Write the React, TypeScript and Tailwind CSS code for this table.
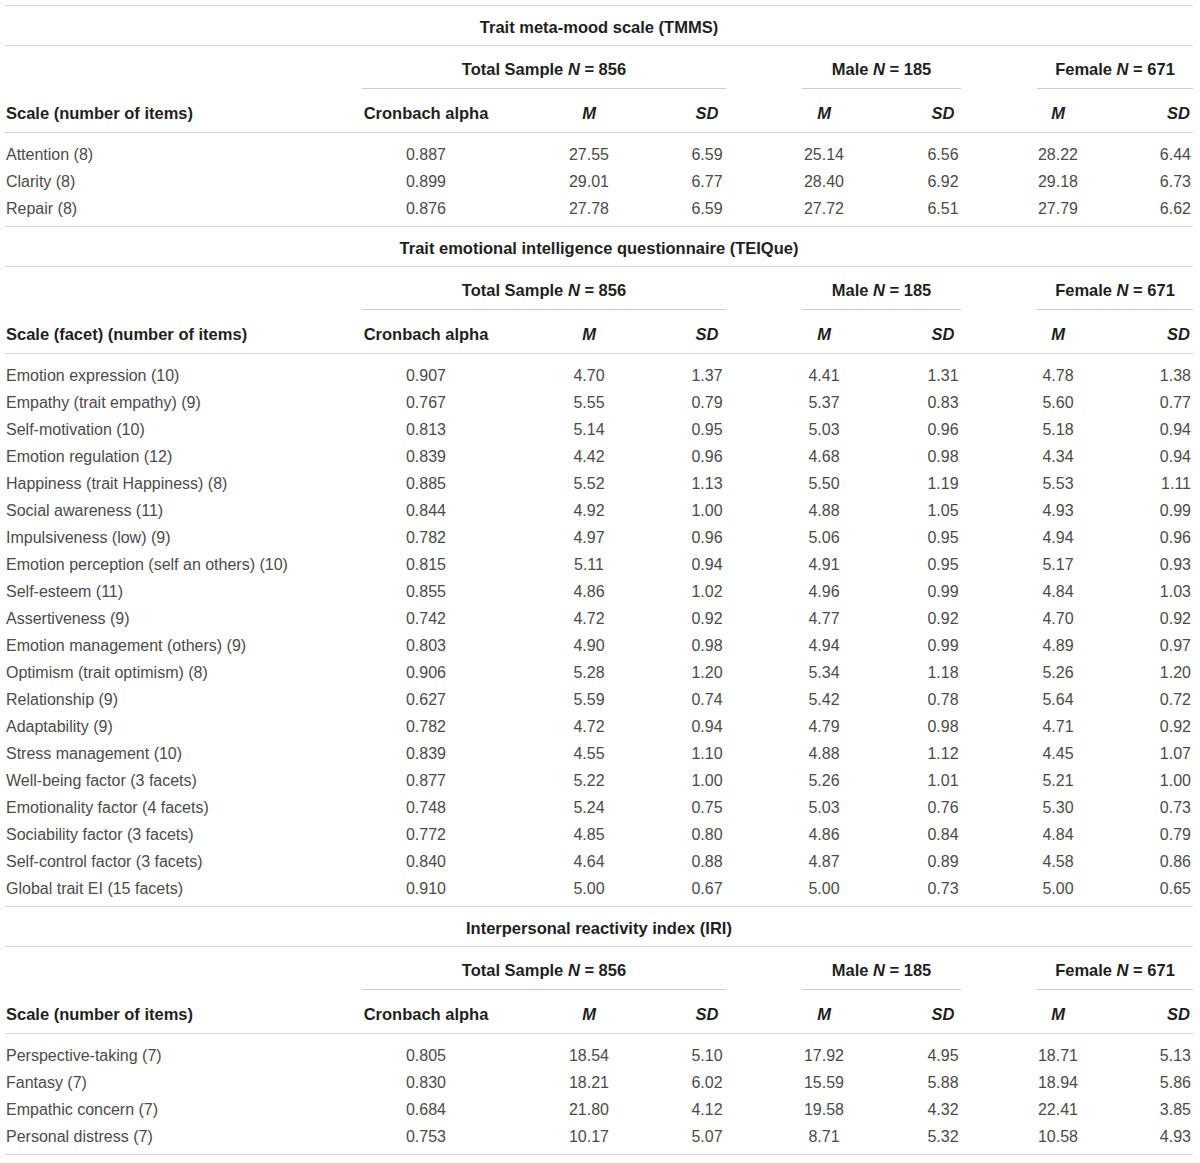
import { FC } from "react";

type Row = [string, string, string, string, string, string, string, string];

const tmms: Row[] = [
  ["Attention (8)", "0.887", "27.55", "6.59", "25.14", "6.56", "28.22", "6.44"],
  ["Clarity (8)", "0.899", "29.01", "6.77", "28.40", "6.92", "29.18", "6.73"],
  ["Repair (8)", "0.876", "27.78", "6.59", "27.72", "6.51", "27.79", "6.62"],
];

const teique: Row[] = [
  ["Emotion expression (10)", "0.907", "4.70", "1.37", "4.41", "1.31", "4.78", "1.38"],
  ["Empathy (trait empathy) (9)", "0.767", "5.55", "0.79", "5.37", "0.83", "5.60", "0.77"],
  ["Self-motivation (10)", "0.813", "5.14", "0.95", "5.03", "0.96", "5.18", "0.94"],
  ["Emotion regulation (12)", "0.839", "4.42", "0.96", "4.68", "0.98", "4.34", "0.94"],
  ["Happiness (trait Happiness) (8)", "0.885", "5.52", "1.13", "5.50", "1.19", "5.53", "1.11"],
  ["Social awareness (11)", "0.844", "4.92", "1.00", "4.88", "1.05", "4.93", "0.99"],
  ["Impulsiveness (low) (9)", "0.782", "4.97", "0.96", "5.06", "0.95", "4.94", "0.96"],
  ["Emotion perception (self an others) (10)", "0.815", "5.11", "0.94", "4.91", "0.95", "5.17", "0.93"],
  ["Self-esteem (11)", "0.855", "4.86", "1.02", "4.96", "0.99", "4.84", "1.03"],
  ["Assertiveness (9)", "0.742", "4.72", "0.92", "4.77", "0.92", "4.70", "0.92"],
  ["Emotion management (others) (9)", "0.803", "4.90", "0.98", "4.94", "0.99", "4.89", "0.97"],
  ["Optimism (trait optimism) (8)", "0.906", "5.28", "1.20", "5.34", "1.18", "5.26", "1.20"],
  ["Relationship (9)", "0.627", "5.59", "0.74", "5.42", "0.78", "5.64", "0.72"],
  ["Adaptability (9)", "0.782", "4.72", "0.94", "4.79", "0.98", "4.71", "0.92"],
  ["Stress management (10)", "0.839", "4.55", "1.10", "4.88", "1.12", "4.45", "1.07"],
  ["Well-being factor (3 facets)", "0.877", "5.22", "1.00", "5.26", "1.01", "5.21", "1.00"],
  ["Emotionality factor (4 facets)", "0.748", "5.24", "0.75", "5.03", "0.76", "5.30", "0.73"],
  ["Sociability factor (3 facets)", "0.772", "4.85", "0.80", "4.86", "0.84", "4.84", "0.79"],
  ["Self-control factor (3 facets)", "0.840", "4.64", "0.88", "4.87", "0.89", "4.58", "0.86"],
  ["Global trait EI (15 facets)", "0.910", "5.00", "0.67", "5.00", "0.73", "5.00", "0.65"],
];

const iri: Row[] = [
  ["Perspective-taking (7)", "0.805", "18.54", "5.10", "17.92", "4.95", "18.71", "5.13"],
  ["Fantasy (7)", "0.830", "18.21", "6.02", "15.59", "5.88", "18.94", "5.86"],
  ["Empathic concern (7)", "0.684", "21.80", "4.12", "19.58", "4.32", "22.41", "3.85"],
  ["Personal distress (7)", "0.753", "10.17", "5.07", "8.71", "5.32", "10.58", "4.93"],
];

// column grid, measured off the picture
const cols = "grid grid-cols-[357px_128px_198px_38px_196px_42px_188px_41px]";

const Line = () => <div className="h-px w-full bg-[#d6d6d6]" />;

const Section: FC<{ title: string; labelHead: string; rows: Row[] }> = ({ title, labelHead, rows }) => {
  return (
    <>
      <Line />
      <div className="flex h-[39px] items-center justify-center pt-[4px] text-[16.5px] font-bold text-[#1f1f1f]">{title}</div>
      <Line />
      <div className={`${cols} h-[43px] text-[16.5px] font-bold text-[#1f1f1f]`}>
        <div />
        <div className="col-span-3 flex items-center justify-center border-b border-[#cccccc] pt-[4px]">
          <span>
            Total Sample <i>N</i> = 856
          </span>
        </div>
        <div className="col-span-2 mr-[3px] ml-[76px] flex items-center justify-center border-b border-[#cccccc] pt-[4px]">
          <span>
            Male <i>N</i> = 185
          </span>
        </div>
        <div className="col-span-2 ml-[73px] flex items-center justify-center border-b border-[#cccccc] pt-[4px]">
          <span>
            Female <i>N</i> = 671
          </span>
        </div>
      </div>
      <div className={`${cols} h-[43px] items-center pt-[6px] text-[16.5px] font-bold text-[#1f1f1f]`}>
        <div className="pl-px">{labelHead}</div>
        <div className="text-center">Cronbach alpha</div>
        <div className="text-center italic">M</div>
        <div className="text-center italic">SD</div>
        <div className="text-center italic">M</div>
        <div className="text-center italic">SD</div>
        <div className="text-center italic">M</div>
        <div className="pr-[3px] text-right italic">SD</div>
      </div>
      <Line />
      <div className="pt-[6px] pb-[6px] text-[#4b4b4b]">
        {rows.map((r) => (
          <div key={r[0]} className={`${cols} h-[27px] items-center pt-[4px]`}>
            <div className="pl-px whitespace-nowrap">{r[0]}</div>
            {r.slice(1, 7).map((v, i) => (
              <div key={i} className="text-center whitespace-nowrap">
                {v}
              </div>
            ))}
            <div className="pr-[2px] text-right whitespace-nowrap">{r[7]}</div>
          </div>
        ))}
      </div>
    </>
  );
};

const App = () => {
  return (
    <div className="min-h-[1163px] bg-white pt-[5px] font-['Liberation_Sans',Arial,sans-serif] text-[16px] leading-none">
      <div className="ml-[5px] w-[1188px]">
        <Section title="Trait meta-mood scale (TMMS)" labelHead="Scale (number of items)" rows={tmms} />
        <Section title="Trait emotional intelligence questionnaire (TEIQue)" labelHead="Scale (facet) (number of items)" rows={teique} />
        <Section title="Interpersonal reactivity index (IRI)" labelHead="Scale (number of items)" rows={iri} />
        <Line />
      </div>
    </div>
  );
};

export default App;
